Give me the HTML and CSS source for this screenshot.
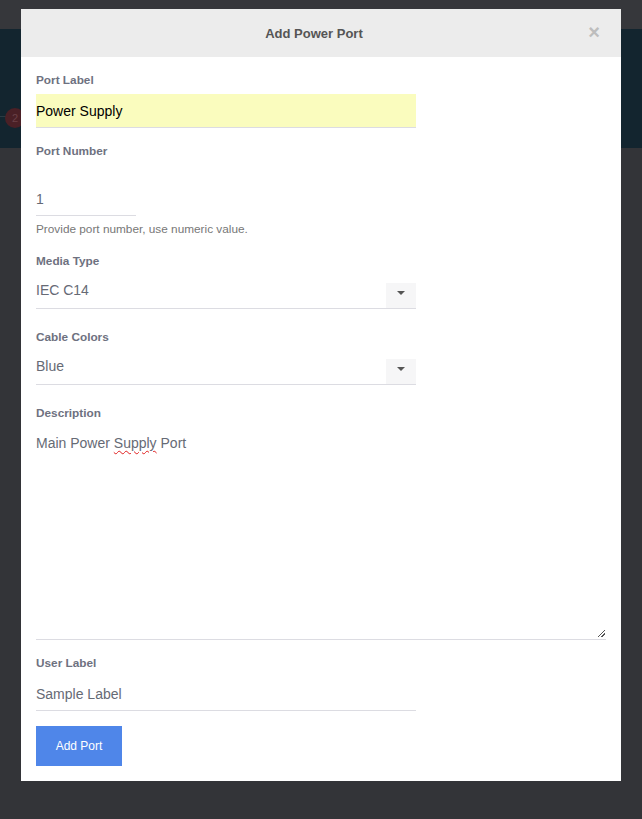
FILE: index.html
```html
<!DOCTYPE html>
<html>
<head>
<meta charset="utf-8">
<link rel="stylesheet" href="styles.css">
</head>
<body>
<div class="page">
  <div class="topbar"></div>
  <div class="band">
    <div class="band-line"></div>
    <span class="badge">2</span>
  </div>
  <div class="rest"></div>
</div>
<div class="modal">
  <div class="modal-header">
    <span class="modal-title">Add Power Port</span>
    <span class="close">×</span>
  </div>
  <div class="modal-body">
    <div class="group g1">
      <label class="lbl">Port Label</label>
      <div class="field autofill wide">Power Supply</div>
    </div>
    <div class="group g2">
      <label class="lbl">Port Number</label>
      <div class="field number">1</div>
      <div class="help">Provide port number, use numeric value.</div>
    </div>
    <div class="group g3">
      <label class="lbl">Media Type</label>
      <div class="field wide select"><span class="val">IEC C14</span><span class="arrow"><i></i></span></div>
    </div>
    <div class="group g4">
      <label class="lbl">Cable Colors</label>
      <div class="field wide select"><span class="val">Blue</span><span class="arrow"><i></i></span></div>
    </div>
    <div class="group g5">
      <label class="lbl">Description</label>
      <div class="textarea">Main Power <span class="spell">Supply</span> Port<span class="grip"></span></div>
    </div>
    <div class="group g6">
      <label class="lbl">User Label</label>
      <div class="field wide">Sample Label</div>
    </div>
    <button class="btn">Add Port</button>
  </div>
</div>
</body>
</html>
```

FILE: styles.css
```css
* { box-sizing: border-box; }
html, body { margin: 0; padding: 0; }
body {
  width: 642px;
  height: 819px;
  overflow: hidden;
  background: #333438;
  font-family: "Liberation Sans", Arial, sans-serif;
  position: relative;
}
.page { display: flex; flex-direction: column; height: 819px; }
.topbar { height: 29px; background: #36373b; }
.band { height: 119px; background: #13252f; position: relative; }
.band-line { position: absolute; left: 0; top: 87px; width: 20px; height: 1px; background: #2b3a42; }
.badge {
  position: absolute; left: 5px; top: 79px; width: 20px; height: 20px;
  border-radius: 50%; background: #4a2026; color: #6b4046; font-size: 11px;
  line-height: 20px; text-align: center;
}
.rest { flex: 1; background: #333438; }

.modal {
  position: absolute;
  left: 21px; top: 9px;
  width: 600px; height: 772px;
  background: #fff;
}
.modal-header {
  height: 48px;
  background: #ececec;
  display: flex; align-items: center; justify-content: center;
  padding-right: 14px;
  position: relative;
}
.modal-title { font-size: 13px; font-weight: bold; color: #555; }
.close {
  position: absolute; right: 21px; top: 13px;
  font-size: 20px; line-height: 20px; color: #bdbdbd; font-weight: bold;
}
.modal-body { padding: 17px 15px 15px; }
.lbl {
  display: block; font-size: 11.8px; font-weight: bold; color: #6e7180;
  line-height: 13px;
}
.field {
  height: 34px;
  border-bottom: 1px solid #dcdce2;
  font-size: 14px; color: #666a75;
  display: flex; align-items: center;
  padding-top: 1px;
}
.wide { width: 380px; }
.autofill { background: #fafcbe; color: #000; }
.number { width: 100px; }
.select { justify-content: space-between; }
.select .val { position: relative; top: -2px; }
.arrow {
  width: 30px; height: 25px; align-self: flex-end; background: #f6f6f7;
  display: flex; align-items: flex-start; justify-content: center;
  padding-top: 8px;
}
.arrow i {
  width: 0; height: 0; border-left: 4px solid transparent; border-right: 4px solid transparent;
  border-top: 4px solid #555;
}
.g1 .lbl { margin-bottom: 7px; }
.g1 { margin-bottom: 17px; }
.g2 .lbl { margin-bottom: 24px; }
.g2 .help { font-size: 11.8px; color: #777; line-height: 14px; margin-top: 6px; }
.g2 { margin-bottom: 19px; }
.g3 .lbl, .g4 .lbl { margin-bottom: 7px; }
.g3, .g4 { margin-bottom: 22px; }
.g5 .lbl { margin-bottom: 7px; }
.textarea {
  position: relative;
  width: 570px; height: 213px;
  border-bottom: 1px solid #dcdce2;
  font-size: 14px; color: #666a75; padding-top: 8px;
}
.spell { text-decoration: underline wavy #e02020; text-decoration-thickness: 1px; text-underline-offset: 2px; }
.grip {
  position: absolute; right: 1px; bottom: 2px; width: 7px; height: 7px;
  background: linear-gradient(135deg, transparent 45%, #555 45%, #555 55%, transparent 55%, transparent 70%, #555 70%, #555 80%, transparent 80%);
}
.g5 { margin-bottom: 17px; }
.g6 .lbl { margin-bottom: 7px; }
.g6 { margin-bottom: 15px; }
.btn {
  display: block;
  width: 86px; height: 40px;
  border: none; background: #4f86e9; color: #fff;
  font-family: "Liberation Sans", Arial, sans-serif; font-size: 12px;
  padding: 0;
}
```
